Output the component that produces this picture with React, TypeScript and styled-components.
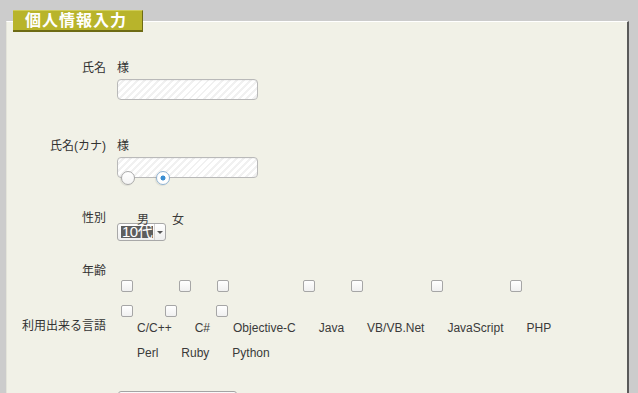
import styled, { createGlobalStyle } from "styled-components";

const GlobalStyle = createGlobalStyle`
	html, body {
		margin: 0;
		padding: 0;
		background: #cccccc;
		overflow: hidden;
	}
	body {
		font-family: "Liberation Sans", "Noto Sans CJK JP", sans-serif;
		font-size: 12px;
		color: #333333;
	}
`;

const Page = styled.div`
	width: 638px;
	height: 393px;
	padding-top: 21px;
	box-sizing: border-box;
`;

const Panel = styled.form`
	position: relative;
	margin: 0 9px 0 6px;
	min-height: 400px;
	padding-top: 34px;
	background: #f1f1e7;
	border-top: 1px solid #ffffff;
	border-left: 1px solid #e4e4da;
	border-right: 2px solid #5a5a5a;
`;

const Tab = styled.h2`
	position: absolute;
	top: -12px;
	left: 6px;
	margin: 0;
	width: 130px;
	height: 22px;
	box-sizing: border-box;
	padding-left: 12px;
	background: #b8b42b;
	border-top: 1px solid #cfcc58;
	border-right: 1px solid #6e6b14;
	border-bottom: 2px solid #6e6b14;
	color: #ffffff;
	font-size: 16px;
	font-weight: bold;
	letter-spacing: 1px;
	line-height: 19px;
	white-space: nowrap;
`;

const Row = styled.div<{ $h?: number }>`
	display: grid;
	grid-template-columns: 99px 1fr;
	column-gap: 11px;
	height: ${(p) => (p.$h ? `${p.$h}px` : "auto")};
`;

const Label = styled.div`
	text-align: right;
	line-height: 25px;
	white-space: nowrap;
`;

const Cell = styled.div`
	display: flex;
	flex-direction: column;
	align-items: flex-start;
`;

const Suffix = styled.span`
	line-height: 25px;
`;

const TextInput = styled.input`
	margin: -2px 0 0;
	width: 141px;
	height: 21px;
	box-sizing: border-box;
	border: 1px solid #b9b9b9;
	border-radius: 4px;
	background: repeating-linear-gradient(135deg, #ffffff 0 3px, #f1f1f1 3px 5px);
	box-shadow: inset 0 1px 1px rgba(0, 0, 0, 0.04);
	outline: none;
`;

const Options = styled.div<{ $width?: number }>`
	display: flex;
	flex-wrap: wrap;
	width: ${(p) => p.$width ?? 400}px;
	padding: 2px 0 0 4px;
	box-sizing: border-box;
`;

const Option = styled.label`
	position: relative;
	padding-left: 16px;
	margin-right: 7px;
	line-height: 25px;
	white-space: nowrap;
	color: #3a3a3a;
`;

const Radio = styled.input.attrs({ type: "radio" })`
	appearance: none;
	position: absolute;
	left: 0;
	top: -37px;
	margin: 0;
	width: 14px;
	height: 14px;
	box-sizing: border-box;
	border-radius: 50%;
	border: 1px solid #a9a9a9;
	background: linear-gradient(#ffffff, #f4f4f4);
	box-shadow: -1px 1px 1px rgba(0, 0, 0, 0.08);
	&:checked {
		border-color: #8eb2d2;
		background: radial-gradient(circle, #3a8ed3 0 2.2px, #ffffff 2.8px);
	}
`;

const Check = styled.input.attrs({ type: "checkbox" })`
	appearance: none;
	position: absolute;
	left: 0;
	top: -36px;
	margin: 0;
	width: 12px;
	height: 12px;
	box-sizing: border-box;
	border: 1px solid #a6a6a6;
	border-radius: 2px;
	background: linear-gradient(#ffffff, #f0f0f0);
`;

const Select = styled.div`
	display: flex;
	align-items: center;
	margin-top: -36px;
	width: 49px;
	height: 18px;
	box-sizing: border-box;
	padding-left: 3px;
	border: 1px solid #a8a8a8;
	border-radius: 3px;
	background: linear-gradient(#ffffff, #eeeeee);
`;

const SelectValue = styled.span`
	height: 12px;
	padding: 0 1px;
	background: #5e5e5e;
	color: #ffffff;
	font-size: 15px;
	line-height: 12px;
	letter-spacing: -0.5px;
	white-space: nowrap;
`;

const SelectArrow = styled.span`
	flex: 1;
	align-self: stretch;
	display: flex;
	align-items: center;
	justify-content: center;
	margin-left: 1px;
	border-left: 1px solid #d2d2d2;
	&::after {
		content: "";
		border-left: 3px solid transparent;
		border-right: 3px solid transparent;
		border-top: 3px solid #555555;
	}
`;

const SubmitButton = styled.button`
	margin: 25px 0 0 1px;
	width: 119px;
	height: 28px;
	border: 1px solid #a4a4a4;
	border-radius: 3px;
	background: linear-gradient(#fafafa, #e2e2e2);
`;

const genders = [
	{ label: "男", checked: false },
	{ label: "女", checked: true },
];

const languages = ["C/C++", "C#", "Objective-C", "Java", "VB/VB.Net", "JavaScript", "PHP", "Perl", "Ruby", "Python"];

function App() {
	return (
		<Page>
			<GlobalStyle />
			<Panel onSubmit={(e) => e.preventDefault()}>
				<Tab>個人情報入力</Tab>
				<Row $h={78}>
					<Label>氏名</Label>
					<Cell>
						<Suffix>様</Suffix>
						<TextInput type="text" />
					</Cell>
				</Row>
				<Row $h={72}>
					<Label>氏名(カナ)</Label>
					<Cell>
						<Suffix>様</Suffix>
						<TextInput type="text" />
					</Cell>
				</Row>
				<Row $h={53}>
					<Label>性別</Label>
					<Options>
						{genders.map((g) => (
							<Option key={g.label}>
								<Radio name="gender" defaultChecked={g.checked} />
								{g.label}
							</Option>
						))}
					</Options>
				</Row>
				<Row $h={55}>
					<Label>年齢</Label>
					<Cell>
						<Select>
							<SelectValue>10代</SelectValue>
							<SelectArrow />
						</Select>
					</Cell>
				</Row>
				<Row>
					<Label>利用出来る言語</Label>
					<Options $width={458}>
						{languages.map((l) => (
							<Option key={l}>
								<Check name="lang" value={l} />
								{l}
							</Option>
						))}
					</Options>
				</Row>
				<Row>
					<span />
					<Cell>
						<SubmitButton type="submit" />
					</Cell>
				</Row>
			</Panel>
		</Page>
	);
}

export default App;
